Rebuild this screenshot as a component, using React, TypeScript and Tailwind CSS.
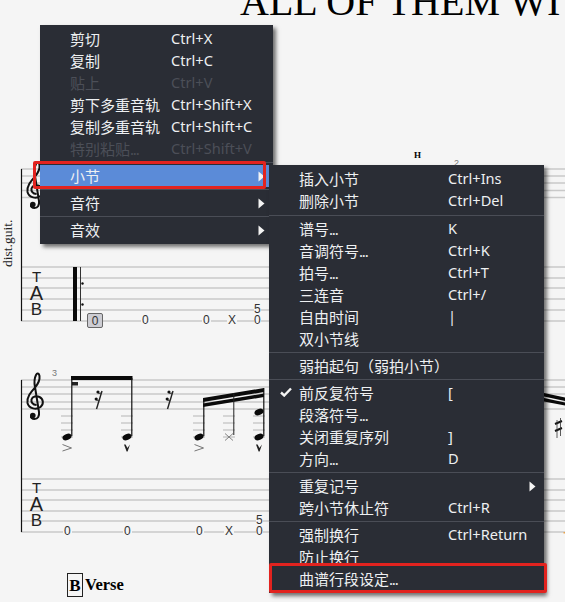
const SCORE_TEXT = "absolute font-['Liberation_Sans',sans-serif] text-[12px] leading-[11px] text-[#333] bg-[#f5f5f5] px-px";
const MENU = "absolute bg-[#2a2d35] py-[3px] font-['Noto_Sans','Noto_Sans_CJK_SC',sans-serif] text-[15px] shadow-[3px_3px_4px_rgba(0,0,0,0.55)]";

function Sep({ className = "h-[5px]" }: { className?: string }) {
  return (
    <div className={`flex items-center ${className}`}>
      <div className="h-px w-full bg-[#4a4d56]" />
    </div>
  );
}

function Arrow() {
  return (
    <svg width="7" height="11" viewBox="0 0 7 11" className="absolute right-[8px] top-[6px]">
      <path d="M0.5 0.5 L6.5 5.5 L0.5 10.5 Z" fill="#f4f4f4" />
    </svg>
  );
}

function Item({
  label,
  keys,
  disabled,
  sub,
  checked,
  active,
  wide,
}: {
  label: string;
  keys?: string;
  disabled?: boolean;
  sub?: boolean;
  checked?: boolean;
  active?: boolean;
  wide?: boolean;
}) {
  const dots = label.endsWith("...");
  return (
    <div
      className={`relative flex h-[22px] items-center pl-[30px] ${active ? "bg-[#5b8bd8]" : ""} ${
        disabled ? "text-[#4c4f58]" : "text-[#eef0f2]"
      }`}
    >
      {checked && (
        <svg width="12" height="10" viewBox="0 0 12 10" className="absolute left-[11px] top-[5px]">
          <path d="M1 5.5 L4.2 8.5 L11 1.5" fill="none" stroke="#f4f4f4" strokeWidth="2.4" />
        </svg>
      )}
      <span className="whitespace-nowrap">
        {dots ? label.slice(0, -3) : label}
        {dots && <span className="tracking-[-1.2px]">...</span>}
      </span>
      {keys && (
        <span className={`absolute whitespace-nowrap text-[14.6px] ${wide ? "left-[179px]" : "left-[131px]"}`}>{keys}</span>
      )}
      {sub && <Arrow />}
    </div>
  );
}

function ContextMenu() {
  return (
    <div className={`${MENU} left-[40px] top-[25px] w-[233px]`}>
      <Item label="剪切" keys="Ctrl+X" />
      <Item label="复制" keys="Ctrl+C" />
      <Item label="贴上" keys="Ctrl+V" disabled />
      <Item label="剪下多重音轨" keys="Ctrl+Shift+X" />
      <Item label="复制多重音轨" keys="Ctrl+Shift+C" />
      <Item label="特别粘贴..." keys="Ctrl+Shift+V" disabled />
      <Sep />
      <Item label="小节" sub active />
      <Sep />
      <Item label="音符" sub />
      <Sep />
      <Item label="音效" sub />
    </div>
  );
}

function BarMenu() {
  return (
    <div className={`${MENU} left-[269px] top-[165px] w-[275px]`}>
      <Item wide label="插入小节" keys="Ctrl+Ins" />
      <Item wide label="删除小节" keys="Ctrl+Del" />
      <Sep className="h-[6px]" />
      <Item wide label="谱号..." keys="K" />
      <Item wide label="音调符号..." keys="Ctrl+K" />
      <Item wide label="拍号..." keys="Ctrl+T" />
      <Item wide label="三连音" keys="Ctrl+/" />
      <Item wide label="自由时间" keys="|" />
      <Item wide label="双小节线" />
      <Sep />
      <Item wide label="弱拍起句（弱拍小节）" />
      <Sep />
      <Item wide label="前反复符号" keys="[" checked />
      <Item wide label="段落符号..." />
      <Item wide label="关闭重复序列" keys="]" />
      <Item wide label="方向..." keys="D" />
      <Sep />
      <Item wide label="重复记号" sub />
      <Item wide label="跨小节休止符" keys="Ctrl+R" />
      <Sep />
      <Item wide label="强制换行" keys="Ctrl+Return" />
      <Item wide label="防止换行" />
      <Item wide label="曲谱行段设定..." />
    </div>
  );
}

const CLEF =
  "M10.5 33 C6.5 33 5 30 5.5 27.5 C6.5 24.5 10.5 23.5 13.5 25 C17.5 27 18 32 14.5 35 C10.5 38 3 37 1.5 31 C0.5 25 5 20 9 15.5 C12 12 14 8 13.5 4 C13 1 11 0.5 10 3 C8.5 6 8 10 9 15 L13 40 C13.5 44 12 47 8.5 47 C6 47 4.5 45.5 5 44";

function Clef({ x, y }: { x: number; y: number }) {
  return (
    <g transform={`translate(${x} ${y})`}>
      <path d={CLEF} fill="none" stroke="#111" strokeWidth="2" />
      <circle cx="6.8" cy="43.6" r="2.8" fill="#111" />
    </g>
  );
}

function Lines({ ys }: { ys: number[] }) {
  return (
    <>
      {ys.map((y) => (
        <line key={y} x1="21" x2="565" y1={y} y2={y} stroke="#c9c9c9" strokeWidth="1.3" />
      ))}
    </>
  );
}

function Head({ x, y }: { x: number; y: number }) {
  return <ellipse cx={x} cy={y} rx="4.7" ry="3" fill="#0a0a0a" transform={`rotate(-22 ${x} ${y})`} />;
}

function Ledgers({ x }: { x: number }) {
  return (
    <>
      {[416, 423, 430, 437].map((y) => (
        <line key={y} x1={x - 6} x2={x + 6} y1={y} y2={y} stroke="#b5b5b5" strokeWidth="1" />
      ))}
    </>
  );
}

function Rest({ x }: { x: number }) {
  return (
    <g transform={`translate(${x} 390)`}>
      <path d="M7 1 L1.5 19" stroke="#222" strokeWidth="1.4" />
      <path d="M2.5 2 C3.5 4 5 4 7 2 M0.5 9 C2 11 3.5 11 5 9" fill="none" stroke="#222" strokeWidth="1" />
      <circle cx="3" cy="2" r="1.6" fill="#111" />
      <circle cx="1.2" cy="9" r="1.6" fill="#111" />
    </g>
  );
}

function Accent({ x }: { x: number }) {
  return <path d={`M${x - 4.5} 444.5 L${x + 4.5} 448 L${x - 4.5} 451`} fill="none" stroke="#666" strokeWidth="0.9" />;
}

function Marcato({ x }: { x: number }) {
  return <path d={`M${x - 3} 444.5 L${x - 1.4} 444.5 L${x + 0.4} 448 L${x + 3} 444.5 L${x + 0.6} 451.5 L${x - 0.4} 451.5 Z`} fill="#222" />;
}

function Notation() {
  return (
    <svg width="565" height="602" viewBox="0 0 565 602" className="absolute inset-0">
      <Lines ys={[169, 176, 183, 190.5, 197.5, 267, 278, 288, 299, 310, 321]} />
      <Lines ys={[380, 387, 394, 402, 409, 479, 490, 500, 511, 521, 532]} />
      <line x1="21.5" x2="21.5" y1="169" y2="321" stroke="#111" strokeWidth="1.2" />
      <line x1="21.5" x2="21.5" y1="380" y2="532" stroke="#111" strokeWidth="1.2" />
      <Clef x={26} y={161} />
      <Clef x={26} y={372} />

      <rect x="73" y="267" width="4" height="54" fill="#0a0a0a" />
      <line x1="80.5" x2="80.5" y1="267" y2="321" stroke="#333" strokeWidth="1" />
      <circle cx="82.5" cy="283.5" r="1.2" fill="#111" />
      <circle cx="82.5" cy="304.5" r="1.2" fill="#111" />

      <Ledgers x={67} />
      <Ledgers x={127} />
      <Ledgers x={199} />
      <Ledgers x={229} />
      <Ledgers x={259} />

      <rect x="71" y="376" width="61.5" height="4" fill="#0a0a0a" />
      <rect x="72" y="382" width="6" height="3.5" fill="#222" />
      <line x1="71.8" x2="71.8" y1="378" y2="436" stroke="#111" strokeWidth="1.2" />
      <line x1="131.8" x2="131.8" y1="378" y2="436" stroke="#111" strokeWidth="1.2" />
      <Head x={67} y={437} />
      <Head x={127} y={437} />
      <Accent x={67} />
      <Marcato x={127} />
      <Rest x={95} />
      <Rest x={166} />

      <path d="M203 398 L264 388 L264 392 L203 402 Z" fill="#0a0a0a" />
      <path d="M203 403.5 L264 393.5 L264 397 L203 407 Z" fill="#0a0a0a" />
      <line x1="203.8" x2="203.8" y1="398" y2="436" stroke="#111" strokeWidth="1.2" />
      <line x1="233.8" x2="233.8" y1="393" y2="435" stroke="#222" strokeWidth="1" />
      <line x1="263.8" x2="263.8" y1="388" y2="436" stroke="#111" strokeWidth="1.2" />
      <Head x={199} y={437} />
      <Head x={259} y={437} />
      <Head x={259} y={412} />
      <path d="M225 433.5 L233 440.5 M233 433.5 L225 440.5" stroke="#777" strokeWidth="0.9" />
      <Accent x={199} />
      <Marcato x={259} />

      <path d="M544 393 L565 397.5 L565 401 L544 396.5 Z" fill="#0a0a0a" />
      <path d="M544 398 L565 402.5 L565 405.5 L544 401.5 Z" fill="#0a0a0a" />
      <path d="M555 424 L562 421 M555 431 L562 428" stroke="#111" strokeWidth="2" />
      <path d="M557 420 V438 M560.5 418 V436" stroke="#333" strokeWidth="0.8" />
      <rect x="563.5" y="532" width="1.5" height="1.5" fill="#e9a34d" />
    </svg>
  );
}

function TabClef({ className }: { className: string }) {
  return (
    <div className={`absolute flex w-[11px] flex-col items-center font-['Liberation_Sans',sans-serif] text-[#222] ${className}`}>
      <span className="text-[15px] leading-[14px]">T</span>
      <span className="text-[20px] leading-[18px]">A</span>
      <span className="text-[17px] leading-[15px]">B</span>
    </div>
  );
}

function Chord({ className }: { className: string }) {
  return (
    <div className={`absolute flex flex-col bg-[#f5f5f5] font-['Liberation_Sans',sans-serif] text-[12px] leading-[11px] text-[#333] ${className}`}>
      <span>5</span>
      <span>0</span>
    </div>
  );
}

export default function App() {
  return (
    <div className="relative h-[602px] w-full overflow-hidden bg-[#f5f5f5] font-['Liberation_Serif',serif] text-black">
      <div className="absolute left-[240px] top-[-21px] whitespace-nowrap text-[40px] leading-[46px]">ALL OF THEM WITH</div>
      <div className="absolute left-[414px] top-[150px] text-[9px] font-bold leading-[10px]">H</div>
      <div className="absolute left-[454px] top-[158px] font-['Liberation_Sans',sans-serif] text-[9px] leading-[10px] text-[#777]">2</div>

      <Notation />

      <div className="absolute left-[-16px] top-[236px] w-[47px] -rotate-90 whitespace-nowrap text-center text-[13.5px] leading-[15px] text-[#222]">dist.guit.</div>

      <TabClef className="left-[31px] top-[270px]" />
      <TabClef className="left-[31px] top-[481px]" />

      <div className="absolute left-[87px] top-[313px] flex h-[15px] w-[16px] items-center justify-center rounded-[2px] border border-[#666] bg-[#cdcdd3] font-['Liberation_Sans',sans-serif] text-[12px] text-[#333]">0</div>
      <span className={`${SCORE_TEXT} left-[141px] top-[315px]`}>0</span>
      <span className={`${SCORE_TEXT} left-[202px] top-[315px]`}>0</span>
      <span className={`${SCORE_TEXT} left-[227px] top-[315px]`}>X</span>
      <Chord className="left-[254px] top-[304px]" />

      <span className={`${SCORE_TEXT} left-[63px] top-[526px]`}>0</span>
      <span className={`${SCORE_TEXT} left-[123px] top-[526px]`}>0</span>
      <span className={`${SCORE_TEXT} left-[195px] top-[526px]`}>0</span>
      <span className={`${SCORE_TEXT} left-[224px] top-[526px]`}>X</span>
      <Chord className="left-[256px] top-[515px]" />

      <span className="absolute left-[52px] top-[368px] font-['Liberation_Sans',sans-serif] text-[9px] leading-[10px] text-[#777]">3</span>

      <div className="absolute left-[67px] top-[573px] flex items-center gap-[2px] text-[16.5px] font-bold">
        <span className="flex h-[24px] w-[16px] items-center justify-center border border-[#222] text-[17px]">B</span>
        <span>Verse</span>
      </div>

      <ContextMenu />
      <BarMenu />

      <div className="absolute left-[33px] top-[161px] h-[28px] w-[233px] rounded-[2px] border-[3px] border-[#e2231f]" />
      <div className="absolute left-[269px] top-[563px] h-[30px] w-[278px] rounded-[2px] border-[3px] border-[#e2231f]" />
    </div>
  );
}
